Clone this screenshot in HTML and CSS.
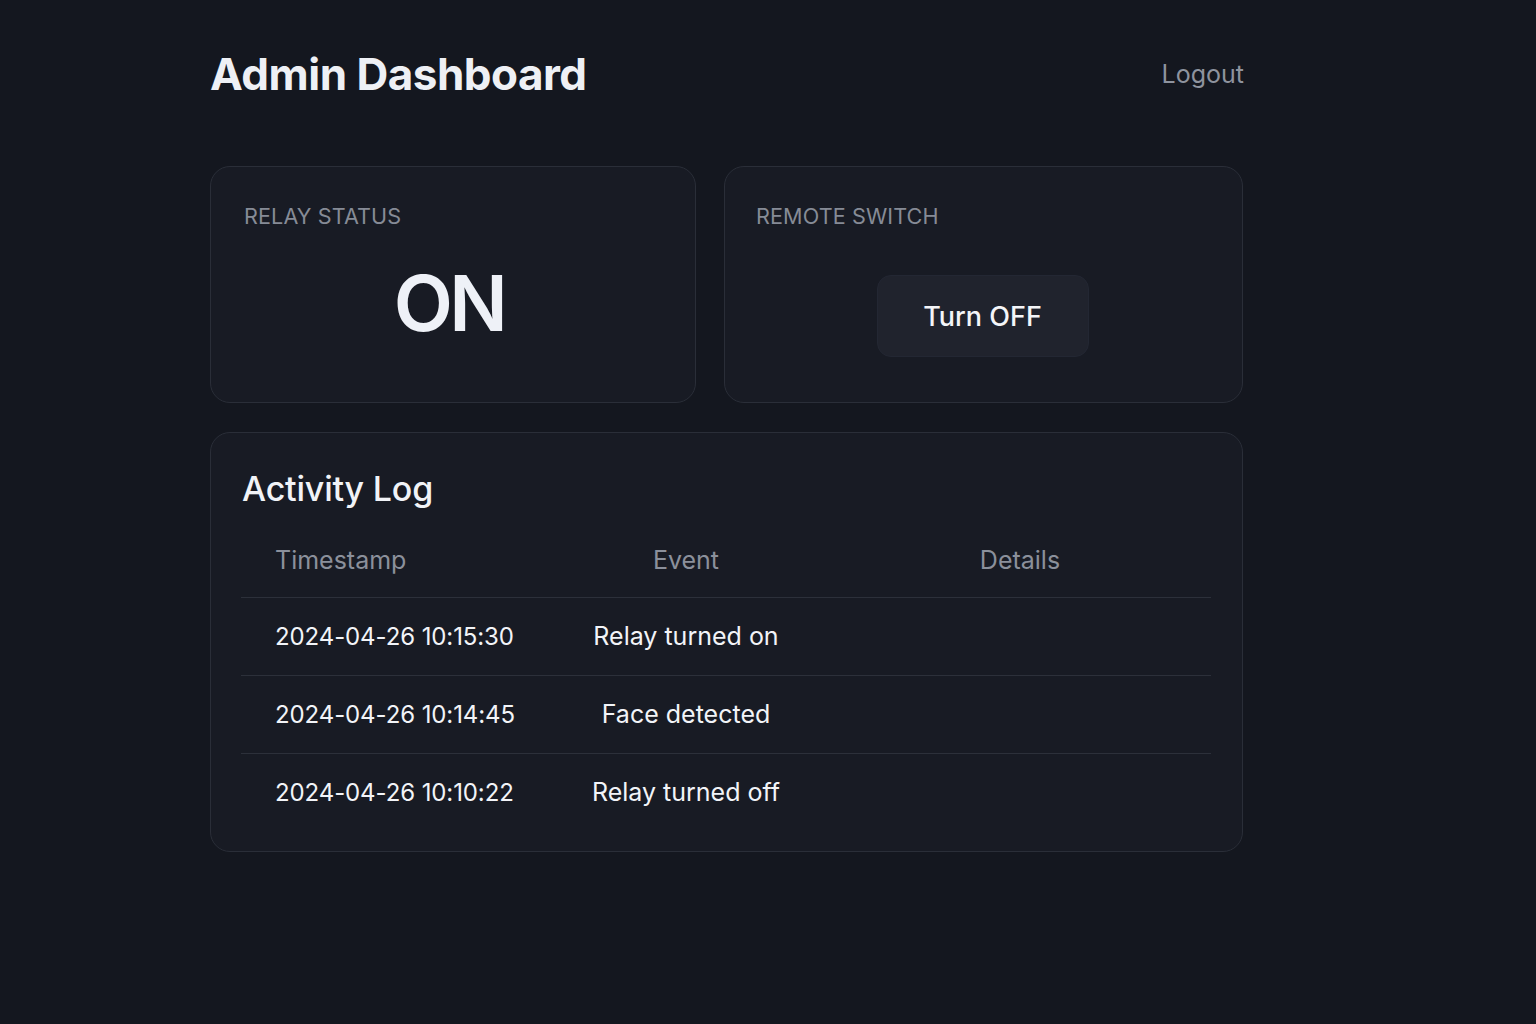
FILE: index.html
```html
<!DOCTYPE html>
<html lang="en">
<head>
<meta charset="utf-8">
<title>Admin Dashboard</title>
<link rel="stylesheet" href="styles.css">
</head>
<body>
<div class="page">
  <header class="topbar">
    <h1 class="title">Admin Dashboard</h1>
    <a class="logout" href="#">Logout</a>
  </header>

  <section class="cards">
    <div class="card card-status">
      <div class="card-label">RELAY STATUS</div>
      <div class="status-value">ON</div>
    </div>
    <div class="card card-switch">
      <div class="card-label">REMOTE SWITCH</div>
      <div class="switch-wrap">
        <button class="switch-btn" type="button">Turn OFF</button>
      </div>
    </div>
  </section>

  <section class="card log">
    <h2 class="log-title">Activity Log</h2>
    <table class="log-table">
      <thead>
        <tr>
          <th class="col-time">Timestamp</th>
          <th class="col-event">Event</th>
          <th class="col-details">Details</th>
        </tr>
      </thead>
      <tbody>
        <tr>
          <td class="col-time">2024-04-26 10:15:30</td>
          <td class="col-event">Relay turned on</td>
          <td class="col-details"></td>
        </tr>
        <tr>
          <td class="col-time">2024-04-26 10:14:45</td>
          <td class="col-event">Face detected</td>
          <td class="col-details"></td>
        </tr>
        <tr>
          <td class="col-time">2024-04-26 10:10:22</td>
          <td class="col-event">Relay turned off</td>
          <td class="col-details"></td>
        </tr>
      </tbody>
    </table>
  </section>
</div>
</body>
</html>
```
FILE: styles.css
```css
* { box-sizing: border-box; }

html, body {
  margin: 0;
  padding: 0;
  background: #14171f;
  color: #eef0f4;
  font-family: Inter, "Noto Sans", "Liberation Sans", sans-serif;
}

.page {
  width: 1033px;
  margin-left: 210px;
  padding-top: 46px;
}

.topbar {
  display: flex;
  justify-content: space-between;
  align-items: center;
  height: 56px;
}

.title {
  margin: 0;
  font-size: 44px;
  font-weight: 700;
  letter-spacing: -0.5px;
  color: #eef0f5;
}

.logout {
  color: #8e939e;
  font-size: 25px;
  text-decoration: none;
  margin-right: -1px;
}

.cards {
  display: grid;
  grid-template-columns: 486px 519px;
  gap: 28px;
  margin-top: 64px;
}

.card {
  background: #181b24;
  border: 1px solid #2a2e38;
  border-radius: 20px;
}

.card-status,
.card-switch {
  height: 237px;
  display: flex;
  flex-direction: column;
}

.card-status { padding: 36px 33px 0; }
.card-switch { padding: 36px 31px 0; }

.card-label {
  font-size: 21.6px;
  color: #868b96;
  letter-spacing: 0.1px;
  line-height: 26px;
}

.status-value {
  text-align: center;
  font-size: 77px;
  font-weight: 600;
  color: #eef1f7;
  line-height: 1;
  margin-top: 36px;
  letter-spacing: -3.5px;
  padding-right: 8px;
}

.switch-wrap {
  display: flex;
  justify-content: center;
  margin-top: 46px;
}

.switch-btn {
  width: 212px;
  height: 82px;
  background: #20232d;
  border: 1px solid #232733;
  border-radius: 14px;
  color: #f4f5f8;
  font-family: inherit;
  font-size: 27px;
  font-weight: 500;
  margin-left: -2px;
}

.log {
  margin-top: 29px;
  padding: 34px 32px 20px 30px;
}

.log-title {
  margin: 0 0 0 1px;
  font-size: 34px;
  font-weight: 500;
  color: #f1f3f7;
  line-height: 44px;
  letter-spacing: -0.2px;
}

.log-table {
  width: 970px;
  border-collapse: collapse;
  margin-top: 13px;
  font-size: 24px;
}

.log-table th {
  font-weight: 400;
  font-size: 25px;
  color: #8b909b;
  height: 73px;
  padding: 0;
  border-bottom: 1px solid #2c303a;
}

.log-table td {
  height: 78px;
  padding: 0;
  color: #f2f4f8;
}

.log-table tbody tr:not(:last-child) td {
  border-bottom: 1px solid #2c303a;
}

.col-time {
  width: 302px;
  text-align: left;
  padding-left: 34px !important;
}

.log-table td.col-time { letter-spacing: -0.1px; }

.col-event {
  width: 286px;
  text-align: center;
}

.log-table td.col-event { font-size: 25px; }

.col-details {
  text-align: center;
}
```
